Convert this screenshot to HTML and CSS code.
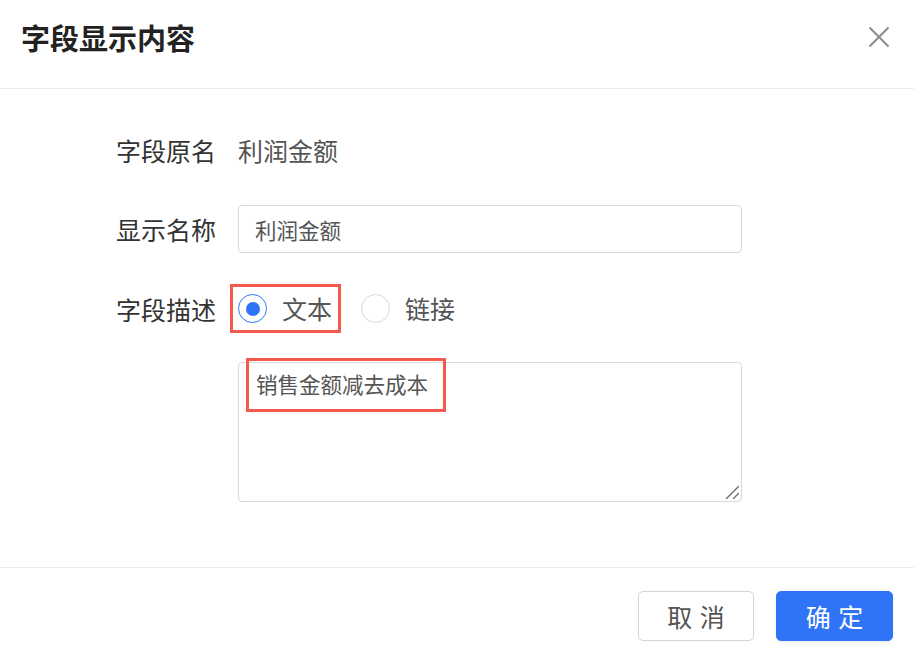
FILE: index.html
```html
<!DOCTYPE html>
<html lang="zh-CN">
<head>
<meta charset="utf-8">
<title>字段显示内容</title>
<link rel="stylesheet" href="styles.css">
</head>
<body>
<div class="dialog">
  <header class="hd">
    <h1 class="title">字段显示内容</h1>
    <span class="close" aria-label="关闭">
      <svg width="22" height="22" viewBox="0 0 22 22"><path d="M1.5 1.5L20.5 20.5M20.5 1.5L1.5 20.5" stroke="#8c8c8c" stroke-width="2" fill="none"/></svg>
    </span>
  </header>
  <main class="bd">
    <div class="row">
      <span class="label">字段原名</span>
      <span class="value">利润金额</span>
    </div>
    <div class="row">
      <span class="label">显示名称</span>
      <div class="input">利润金额</div>
    </div>
    <div class="row">
      <span class="label">字段描述</span>
      <div class="radios">
        <label class="opt mark"><span class="radio on"></span><span class="opt-text">文本</span></label>
        <label class="opt second"><span class="radio"></span><span class="opt-text">链接</span></label>
      </div>
    </div>
    <div class="row area-row">
      <span class="label"></span>
      <div class="textarea">
        <span class="mark-text">销售金额减去成本</span>
        <svg class="resize" width="14" height="14" viewBox="0 0 14 14"><path d="M1 14L14 1M8 14L14 8" stroke="#777" stroke-width="1.5" fill="none"/></svg>
      </div>
    </div>
  </main>
  <footer class="ft">
    <button class="btn">取 消</button>
    <button class="btn primary">确 定</button>
  </footer>
</div>
</body>
</html>
```
FILE: styles.css
```css
* { box-sizing: border-box; }
html, body {
  margin: 0;
  padding: 0;
  background: #fff;
  font-family: "Noto Sans CJK SC", "Noto Sans", sans-serif;
}
.dialog {
  width: 914px;
  height: 656px;
  background: #fff;
}
.hd {
  height: 89px;
  border-bottom: 1px solid #ececec;
  display: flex;
  justify-content: space-between;
  align-items: flex-start;
  padding: 17px 24px 0 21px;
}
.title {
  margin: 0;
  font-size: 29px;
  line-height: 40px;
  font-weight: 700;
  color: #222;
}
.close {
  display: block;
  width: 22px;
  height: 22px;
  margin-top: 9px;
}
.close svg { display: block; }
.bd {
  height: 478px;
  padding: 37px 0 0 116px;
}
.row {
  display: flex;
  align-items: center;
  min-height: 48px;
  margin-bottom: 31px;
}
.area-row {
  align-items: flex-start;
  margin-top: -2px;
  margin-bottom: 0;
}
.label {
  width: 100px;
  margin-right: 22px;
  font-size: 25px;
  line-height: 34px;
  color: #333;
  white-space: nowrap;
}
.value {
  font-size: 25px;
  line-height: 34px;
  color: #555;
}
.input {
  width: 504px;
  height: 48px;
  border: 1px solid #d9d9d9;
  border-radius: 4px;
  padding: 0 16px;
  display: flex;
  align-items: center;
  font-size: 21.5px;
  color: #555;
}
.radios {
  display: flex;
  align-items: center;
}
.opt {
  display: flex;
  align-items: center;
  gap: 15px;
}
.opt.mark {
  margin-left: -8px;
  border: 3px solid #f5594d;
  padding: 7px 6px 7px 5px;
}
.opt.second {
  margin-left: 20px;
}
.radio {
  width: 29px;
  height: 29px;
  border-radius: 50%;
  border: 1px solid #d9d9d9;
  display: flex;
  align-items: center;
  justify-content: center;
  background: #fff;
}
.radio.on {
  border-color: #2f74f6;
}
.radio.on::after {
  content: "";
  width: 14px;
  height: 14px;
  border-radius: 50%;
  background: #2f74f6;
}
.opt-text {
  font-size: 25px;
  line-height: 29px;
  color: #555;
}
.textarea {
  position: relative;
  width: 504px;
  height: 140px;
  border: 1px solid #d9d9d9;
  border-radius: 4px;
  display: flex;
  align-items: flex-start;
}
.mark-text {
  margin: -5px 0 0 7px;
  border: 3px solid #f5594d;
  padding: 8px 15px 10px 7px;
  font-size: 21.5px;
  line-height: 30px;
  color: #555;
  background: transparent;
  white-space: nowrap;
}
.resize {
  position: absolute;
  right: 2px;
  bottom: 2px;
}
.ft {
  border-top: 1px solid #ececec;
  display: flex;
  justify-content: flex-end;
  gap: 22px;
  padding: 23px 21px 0 0;
}
.btn {
  width: 116px;
  height: 50px;
  border-radius: 5px;
  border: 1px solid #d4d4d4;
  background: #fff;
  color: #555;
  font-family: inherit;
  font-size: 25px;
  letter-spacing: 1px;
  padding: 0 0 0 1px;
  cursor: pointer;
}
.btn.primary {
  width: 117px;
  background: #2f74f6;
  border-color: #2f74f6;
  color: #fff;
  box-shadow: 0 2px 3px rgba(0, 0, 0, 0.06);
}
```
